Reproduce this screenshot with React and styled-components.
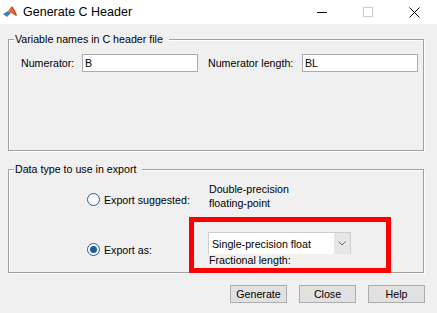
import React from "react";
import styled, { createGlobalStyle } from "styled-components";

const GlobalStyle = createGlobalStyle`
  html, body {
    margin: 0;
    padding: 0;
    background: #f0f0f0;
  }
  body {
    font-family: "Liberation Sans", Arial, sans-serif;
    font-size: 8pt;
    color: #000;
  }
`;

const Window = styled.div`
  width: 437px;
  height: 313px;
  background: #f0f0f0;
  overflow: hidden;
  display: flex;
  flex-direction: column;
`;

const TitleBar = styled.div`
  height: 24px;
  background: #fff;
  display: flex;
  align-items: center;
  flex-shrink: 0;
`;

const AppIcon = styled.svg`
  margin-left: 3px;
  display: block;
`;

const Title = styled.span`
  margin-left: 6px;
  font-size: 12.5px;
  color: #000;
`;

const Controls = styled.div`
  margin-left: auto;
  display: flex;
  height: 24px;
`;

const CtrlButton = styled.div`
  width: 46px;
  height: 24px;
  display: flex;
  align-items: center;
  justify-content: center;
`;

const Body = styled.div`
  padding: 0 13px 0 8px;
`;

const Group = styled.fieldset`
  margin: ${(p) => p.$top}px 0 0;
  padding: 0;
  border: 1px solid #a0a0a0;
  box-shadow: 1px 1px 0 #fff, inset 1px 1px 0 #fff;
  min-inline-size: 0;
`;

const Legend = styled.legend`
  margin-left: 5px;
  padding: 0 6px 0 1px;
  line-height: 13px;
  background: #f0f0f0;
`;

const GroupBody = styled.div`
  box-sizing: border-box;
  height: ${(p) => p.$h}px;
`;

const NamesBody = styled(GroupBody)`
  padding: 8px 0 0 12px;
`;

const Row = styled.div`
  display: flex;
  align-items: center;
`;

const Label = styled.span`
  width: ${(p) => p.$w}px;
  margin-left: ${(p) => p.$ml || 0}px;
  flex-shrink: 0;
`;

const TextBox = styled.input`
  box-sizing: border-box;
  width: 116px;
  height: 18px;
  margin: 0;
  padding: 0 2px;
  border: 1px solid #ababab;
  background: #fff;
  font-family: "Liberation Sans", Arial, sans-serif;
  font-size: 8pt;
  color: #000;
  outline: none;
`;

const ExportBody = styled(GroupBody)`
  padding: 6px 0 0 78px;
  display: grid;
  grid-template-columns: 122px 1fr;
  row-gap: 17px;
  align-items: start;
`;

const Choice = styled.label`
  display: flex;
  align-items: center;
  gap: 4px;
  padding-top: 11px;
`;

const Radio = styled.span`
  box-sizing: border-box;
  width: 13px;
  height: 13px;
  border-radius: 50%;
  border: 1px solid #2d5a86;
  background: #fff;
  display: flex;
  align-items: center;
  justify-content: center;

  &::after {
    content: "";
    width: 7px;
    height: 7px;
    border-radius: 50%;
    background: ${(p) => (p.$checked ? "#1f5b94" : "transparent")};
  }
`;

const Note = styled.div`
  line-height: 14px;
`;

const TypeCell = styled.div`
  position: relative;
`;

const ComboBox = styled.div`
  box-sizing: border-box;
  width: 143px;
  height: 22px;
  margin-left: -1px;
  display: flex;
  border: 1px solid #cdcdcd;
  border-bottom: none;
`;

const ComboText = styled.div`
  flex: 1;
  background: #fff;
  padding-left: 3px;
  display: flex;
  align-items: center;
`;

const ComboArrow = styled.div`
  width: 16px;
  background: #e6e6e6;
  display: flex;
  align-items: center;
  justify-content: center;
`;

const FracLabel = styled.div`
  line-height: 13px;
`;

const Highlight = styled.div`
  position: absolute;
  left: -20px;
  top: -15px;
  width: 202px;
  height: 56px;
  box-sizing: border-box;
  border: 5px solid #ff0000;
  pointer-events: none;
`;

const Footer = styled.div`
  display: flex;
  justify-content: flex-end;
  gap: 12px;
  padding: 0 12px;
  margin-top: 12px;
`;

const Button = styled.button`
  box-sizing: border-box;
  width: 57px;
  height: 18px;
  margin: 0;
  padding: 0;
  border: 1px solid #adadad;
  background: #e1e1e1;
  font-family: "Liberation Sans", Arial, sans-serif;
  font-size: 8pt;
  color: #000;
`;

const MatlabIcon = () => (
  <AppIcon width="14" height="12" viewBox="0 0 14 12">
    <polygon points="0,8 5,5 8,7 4,11" fill="#3d7fc0" />
    <polygon points="5,5 8,1 10,4 13,10 8,7" fill="#e86a2b" />
    <polygon points="8,1 9.5,0.5 14,9 13,10 10,4" fill="#b8281c" />
  </AppIcon>
);

const App = () => {
  return (
    <Window>
      <GlobalStyle />
      <TitleBar>
        <MatlabIcon />
        <Title>Generate C Header</Title>
        <Controls>
          <CtrlButton>
            <svg width="10" height="1" viewBox="0 0 10 1">
              <rect width="10" height="1" fill="#000" />
            </svg>
          </CtrlButton>
          <CtrlButton>
            <svg width="10" height="10" viewBox="0 0 10 10">
              <rect x="0.5" y="0.5" width="9" height="9" fill="none" stroke="#cccccc" />
            </svg>
          </CtrlButton>
          <CtrlButton>
            <svg width="11" height="11" viewBox="0 0 11 11">
              <path d="M0.5 0.5 L10.5 10.5 M10.5 0.5 L0.5 10.5" stroke="#000" strokeWidth="1" />
            </svg>
          </CtrlButton>
        </Controls>
      </TitleBar>

      <Body>
        <Group $top={9}>
          <Legend>Variable names in C header file</Legend>
          <NamesBody $h={104}>
            <Row>
              <Label $w={61}>Numerator:</Label>
              <TextBox readOnly value="B" />
              <Label $w={94} $ml={10}>
                Numerator length:
              </Label>
              <TextBox readOnly value="BL" />
            </Row>
          </NamesBody>
        </Group>

        <Group $top={12}>
          <Legend>Data type to use in export</Legend>
          <ExportBody $h={96}>
            <Choice>
              <Radio />
              Export suggested:
            </Choice>
            <Note>
              <div>Double-precision</div>
              <div>floating-point</div>
            </Note>
            <Choice>
              <Radio $checked />
              Export as:
            </Choice>
            <TypeCell>
              <ComboBox>
                <ComboText>Single-precision float</ComboText>
                <ComboArrow>
                  <svg width="8" height="5" viewBox="0 0 8 5">
                    <polyline points="0.5,0.5 4,4 7.5,0.5" fill="none" stroke="#666" strokeWidth="1" />
                  </svg>
                </ComboArrow>
              </ComboBox>
              <FracLabel>Fractional length:</FracLabel>
              <Highlight />
            </TypeCell>
          </ExportBody>
        </Group>
      </Body>

      <Footer>
        <Button>Generate</Button>
        <Button>Close</Button>
        <Button>Help</Button>
      </Footer>
    </Window>
  );
};

export default App;
